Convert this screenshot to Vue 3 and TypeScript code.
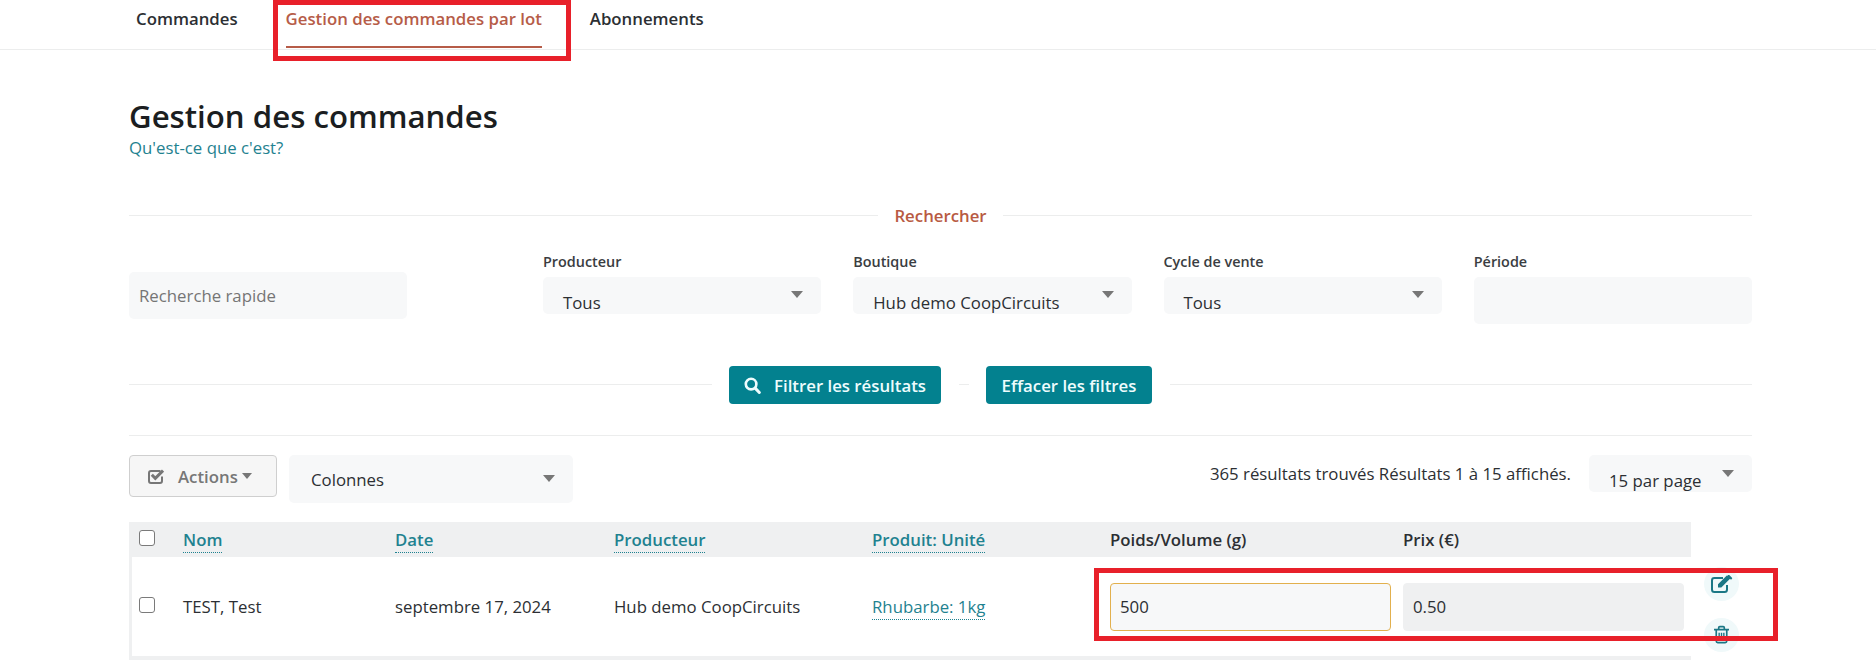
<script setup lang="ts">
const tabs = [
  { label: 'Commandes', active: false },
  { label: 'Gestion des commandes par lot', active: true },
  { label: 'Abonnements', active: false }
]

const filters = [
  { label: 'Producteur', value: 'Tous' },
  { label: 'Boutique', value: 'Hub demo CoopCircuits' },
  { label: 'Cycle de vente', value: 'Tous' }
]
</script>

<template>
  <div class="page">
    <nav class="tabs">
      <a v-for="tab in tabs" :key="tab.label" class="tab" :class="{ active: tab.active }">{{ tab.label }}</a>
    </nav>

    <main class="content">
      <h1>Gestion des commandes</h1>
      <a class="help">Qu'est-ce que c'est?</a>

      <div class="search-title">
        <span class="line"></span>
        <span class="search-label">Rechercher</span>
        <span class="line"></span>
      </div>

      <div class="filters">
        <div class="quick-search">Recherche rapide</div>
        <div class="filter-grid">
          <div v-for="f in filters" :key="f.label" class="filter">
            <label>{{ f.label }}</label>
            <div class="select">
              <span>{{ f.value }}</span>
              <i class="arrow"></i>
            </div>
          </div>
          <div class="filter">
            <label>Période</label>
            <div class="period"></div>
          </div>
        </div>
      </div>

      <div class="buttons">
        <span class="line"></span>
        <button class="btn">
          <svg class="search-icon" viewBox="0 0 18 18" width="17" height="17" fill="none" stroke="currentColor">
            <circle cx="7.5" cy="7.5" r="5.6" stroke-width="2.8" />
            <path d="M11.8 11.8 16.2 16.4" stroke-width="3.2" stroke-linecap="round" />
          </svg>
          Filtrer les résultats
        </button>
        <span class="line short"></span>
        <button class="btn clear">Effacer les filtres</button>
        <span class="line"></span>
      </div>

      <div class="divider"></div>

      <div class="toolbar">
        <button class="actions-btn">
          <svg viewBox="0 0 16 16" width="16" height="16">
            <path fill="none" stroke="#777" stroke-width="2" d="M14 8.500v4.500c0 1.200-.9 2-2 2H3c-1.100 0-2-.8-2-2V5c0-1.200.9-2 2-2h9.500" />
            <path fill="none" stroke="#777" stroke-width="3" d="M3.800 6.800 7.300 10.300 15 2.600" />
          </svg>
          <span>Actions</span>
          <i class="caret"></i>
        </button>
        <div class="select columns">
          <span>Colonnes</span>
          <i class="arrow"></i>
        </div>
        <div class="results">365 résultats trouvés Résultats 1 à 15 affichés.</div>
        <div class="select per-page">
          <span>15 par page</span>
          <i class="arrow"></i>
        </div>
      </div>

      <div class="table">
        <div class="grid head">
          <div><span class="check"></span></div>
          <div><a class="sort">Nom</a></div>
          <div><a class="sort">Date</a></div>
          <div><a class="sort">Producteur</a></div>
          <div><a class="sort">Produit: Unité</a></div>
          <div class="plain">Poids/Volume (g)</div>
          <div class="plain">Prix (€)</div>
        </div>
        <div class="row-line">
          <div class="grid row">
            <div><span class="check"></span></div>
            <div>TEST, Test</div>
            <div>septembre 17, 2024</div>
            <div>Hub demo CoopCircuits</div>
            <div><a class="sort thin">Rhubarbe: 1kg</a></div>
            <div><input class="cell-input" value="500" /></div>
            <div><input class="cell-input locked" value="0.50" disabled /></div>
          </div>
          <div class="row-actions">
            <span class="round">
              <svg viewBox="0 0 22 18" width="22" height="18">
                <path fill="none" stroke="#1b7785" stroke-width="2" d="M16 10v4.500c0 1.400-1 2.500-2.400 2.500H3.400C2 17 1 15.900 1 14.500V5.400C1 4 2 3 3.400 3H12" />
                <path fill="#1b7785" d="M7 9.200 15.800.6l3.200 3.200-8.700 8.700H7zM16.800 0l1 0c.3 0 .5 0 .7.2l2.500 2.500c.3.300.3.800 0 1.100L20 4.800l-3.600-3.600z" />
              </svg>
            </span>
            <span class="round trash">
              <svg viewBox="0 0 16 19" width="15" height="19">
                <path fill="none" stroke="#1b7785" stroke-width="1.800" d="M2.400 5v11.500c0 1 .7 1.700 1.600 1.700h8c.9 0 1.600-.7 1.600-1.700V5M0 4.200h16M5 4V2.200C5 1.400 5.500 1 6.200 1h3.600c.7 0 1.200.4 1.200 1.200V4" />
                <path fill="none" stroke="#1b7785" stroke-width="1.500" d="M5.500 7.500v8M8 7.500v8M10.500 7.500v8" />
              </svg>
            </span>
          </div>
        </div>
        <div class="row-end"></div>
      </div>
    </main>

    <div class="mark mark-tab"></div>
    <div class="mark mark-row"></div>
  </div>
</template>

<style>
html, body {
  margin: 0;
  background: #fff;
}
</style>

<style scoped>
.page {
  position: relative;
  width: 1876px;
  height: 660px;
  overflow: hidden;
  font-family: "Open Sans", "Liberation Sans", sans-serif;
  font-size: 16.8px;
  color: #2c2f33;
}

.tabs {
  display: flex;
  gap: 48px;
  height: 49px;
  padding-left: 136px;
  border-bottom: 1px solid #eceded;
}

.tab {
  height: 46px;
  line-height: 38px;
  font-weight: 600;
  color: #2c2f33;
}

.tab.active {
  color: #b65c48;
  border-bottom: 2px solid #b65c48;
}

.content {
  width: 1623px;
  margin-left: 129px;
}

h1 {
  margin: 46px 0 0;
  font-size: 31.2px;
  line-height: 40px;
  font-weight: 600;
  color: #1b1e21;
}

.help {
  display: block;
  line-height: 22px;
  margin-top: 1px;
  color: #1f8290;
}

.search-title {
  display: flex;
  align-items: center;
  gap: 16px;
  height: 22px;
  margin-top: 45px;
}

.line {
  flex: 1;
  height: 1px;
  background: #eceded;
}

.line.short {
  flex: none;
  width: 10px;
}

.search-label {
  font-weight: 600;
  color: #b85a42;
}

.filters {
  display: flex;
  margin-top: 26px;
}

.quick-search {
  flex: none;
  width: 278px;
  height: 47px;
  margin-top: 20px;
  margin-right: 136px;
  padding-left: 10px;
  box-sizing: border-box;
  line-height: 47px;
  background: #f7f8f9;
  border-radius: 5px;
  color: #757575;
}

.filter-grid {
  flex: 1;
  display: grid;
  grid-template-columns: repeat(4, 1fr);
  column-gap: 32px;
}

label {
  display: block;
  height: 20px;
  margin-bottom: 5px;
  font-size: 14.4px;
  line-height: 20px;
  font-weight: 600;
  color: #3a3d41;
}

.select {
  position: relative;
  height: 37px;
  padding: 15px 0 0 20px;
  box-sizing: border-box;
  overflow: hidden;
  line-height: 22px;
  background: #f7f8f9;
  border-radius: 5px;
  color: #2c2f33;
}

.arrow {
  position: absolute;
  top: 14px;
  right: 18px;
  width: 0;
  height: 0;
  border-left: 6px solid transparent;
  border-right: 6px solid transparent;
  border-top: 7px solid #777;
}

.period {
  height: 47px;
  background: #f7f8f9;
  border-radius: 5px;
}

.buttons {
  display: flex;
  align-items: center;
  gap: 17.5px;
  margin-top: 42px;
}

.buttons .line {
  margin-top: -2px;
}

.btn {
  display: flex;
  align-items: center;
  justify-content: center;
  gap: 13px;
  width: 212px;
  height: 38px;
  padding: 0;
  border: none;
  border-radius: 4px;
  background: #03818f;
  color: #eefcfd;
  font-family: inherit;
  font-size: 16.8px;
  font-weight: 600;
}

.btn.clear {
  width: 166px;
}

.search-icon {
  flex: none;
}

.divider {
  height: 1px;
  margin-top: 31px;
  background: #eceded;
}

.toolbar {
  display: flex;
  align-items: flex-start;
  margin-top: 19px;
}

.actions-btn {
  display: flex;
  align-items: center;
  flex: none;
  width: 148px;
  height: 42px;
  padding: 0 0 0 18px;
  box-sizing: border-box;
  border: 1px solid #cfcfcf;
  border-radius: 4px;
  background: #f6f6f6;
  color: #777;
  font-family: inherit;
  font-size: 16.8px;
  font-weight: 600;
}

.actions-btn span {
  margin-left: 14px;
}

.caret {
  width: 0;
  height: 0;
  margin-left: 4px;
  border-left: 5.500px solid transparent;
  border-right: 5.500px solid transparent;
  border-top: 6px solid #777;
}

.columns {
  flex: none;
  width: 284px;
  height: 48px;
  margin-left: 12px;
  padding: 14px 0 0 22px;
}

.columns .arrow {
  top: 20px;
}

.results {
  margin-left: auto;
  margin-top: 8px;
  line-height: 22px;
}

.per-page {
  flex: none;
  width: 163px;
  margin-left: 18px;
}

.per-page .arrow {
  top: 15px;
}

.table {
  width: 1623px;
  margin-top: 19px;
}

.grid {
  display: grid;
  grid-template-columns: 54px 212px 219px 258px 238px 293px 288px;
  width: 1562px;
  box-sizing: border-box;
}

.head {
  height: 35px;
  background: #eff0f1;
  font-weight: 600;
  align-items: center;
}

.head .check {
  margin-top: -3px;
}

.check {
  display: block;
  width: 16px;
  height: 16px;
  margin-left: 10px;
  box-sizing: border-box;
  border: 1px solid #7a7a7a;
  border-radius: 3px;
  background: #fff;
}

.sort {
  padding-bottom: 1px;
  border-bottom: 1.500px dotted #1f8290;
  color: #1f8290;
}

.sort.thin {
  font-weight: 400;
}

.plain {
  color: #2c2f33;
}

.row-line {
  display: flex;
}

.row {
  flex: none;
  height: 99px;
  align-items: center;
  border-left: 3px solid #eff0f1;
  grid-template-columns: 51px 212px 219px 258px 238px 293px 288px;
}

.row .check {
  margin-left: 7px;
  margin-top: -3px;
}

.cell-input {
  display: block;
  width: 281px;
  height: 48px;
  padding: 0 0 0 9px;
  box-sizing: border-box;
  border: 1px solid #e2b04e;
  border-radius: 4px;
  outline: none;
  background: #f7f8f9;
  font-family: inherit;
  font-size: 16.8px;
  color: #2c2f33;
}

.cell-input.locked {
  border-color: #eff0f1;
  background: #eff0f1;
}

.row-actions {
  display: flex;
  flex-direction: column;
  gap: 17px;
  margin: 10px 0 0 13px;
}

.round {
  display: flex;
  align-items: center;
  justify-content: center;
  width: 35px;
  height: 34px;
  border-radius: 50%;
  background: #f0f9fa;
}

.round.trash svg {
  margin-top: -2px;
}

.row-end {
  width: 1562px;
  height: 4px;
  background: #eff0f1;
}

/* red annotation boxes drawn over the page */
.mark {
  position: absolute;
  box-sizing: border-box;
  border: 5px solid #e8202a;
  pointer-events: none;
}

.mark-tab {
  left: 273px;
  top: 0;
  width: 298px;
  height: 61px;
}

.mark-row {
  left: 1094px;
  top: 568px;
  width: 684px;
  height: 73px;
}
</style>
